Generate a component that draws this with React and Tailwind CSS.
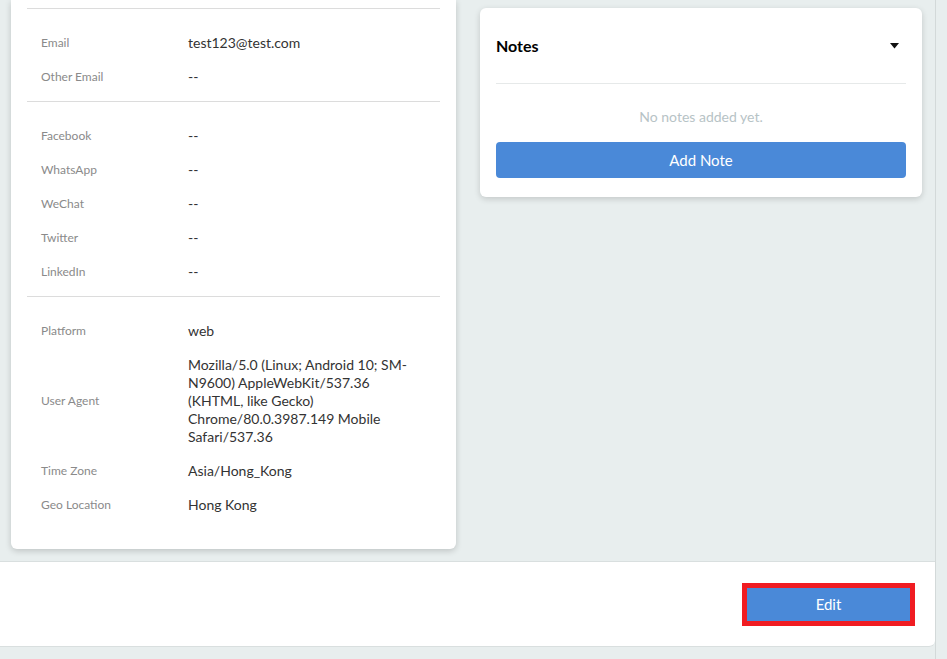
import React from 'react';

const sections = [
  [
    ['Email', 'test123@test.com'],
    ['Other Email', '--'],
  ],
  [
    ['Facebook', '--'],
    ['WhatsApp', '--'],
    ['WeChat', '--'],
    ['Twitter', '--'],
    ['LinkedIn', '--'],
  ],
  [
    ['Platform', 'web'],
    ['User Agent', 'Mozilla/5.0 (Linux; Android 10; SM-N9600) AppleWebKit/537.36 (KHTML, like Gecko) Chrome/80.0.3987.149 Mobile Safari/537.36'],
    ['Time Zone', 'Asia/Hong_Kong'],
    ['Geo Location', 'Hong Kong'],
  ],
];

const InfoRow = ({ label, value }) => (
  <div className="flex items-center py-2">
    <div className="w-[161px] shrink-0 pl-[14px] text-[12px] leading-[18px] text-[#8a8a8a]">{label}</div>
    <div className="w-[228px] text-[14px] leading-[18px] text-[#333]">{value}</div>
  </div>
);

const App = () => {
  return (
    <div className="flex h-[659px] overflow-hidden bg-[#e8eeee] font-['Lato','Noto_Sans',sans-serif]">
      <div className="flex w-[936px] shrink-0 flex-col border-r border-[#d3d9d9]">
        <div className="flex gap-6 pl-[11px] pr-[13px]">
          <div className="w-[445px] shrink-0 rounded-b-md bg-white px-4 pt-2 pb-[27px] shadow-[0_2px_6px_rgba(0,0,0,0.18)]">
            {sections.map((rows, i) => (
              <div key={i} className={`border-t border-[#dcdcdc] pt-[17px] ${i === sections.length - 1 ? '' : 'pb-[7px]'}`}>
                {rows.map(([label, value]) => (
                  <InfoRow key={label} label={label} value={value} />
                ))}
              </div>
            ))}
          </div>

          <div className="flex-1 pt-2">
            <div className="rounded-md bg-white px-4 pb-[19px] shadow-[0_2px_6px_rgba(0,0,0,0.16)]">
              <div className="flex h-[76px] items-center justify-between border-b border-[#e6e9e9] pt-px">
                <span className="text-[16px] font-bold text-black">Notes</span>
                <svg width="9" height="6" viewBox="0 0 9 6" className="mr-[7px]">
                  <path d="M0 0 H9 L4.5 5.5 Z" fill="#111" />
                </svg>
              </div>
              <div className="pt-[23px] text-center text-[14px] leading-5 text-[#b7c3c6]">No notes added yet.</div>
              <button className="mt-[15px] h-9 w-full rounded bg-[#4a89d8] text-[15px] text-white">Add Note</button>
            </div>
          </div>
        </div>

        <div className="mt-3 flex h-[86px] items-center justify-end rounded-br-md border-y border-[#d9dfdf] bg-white pr-5">
          <div className="border-[5px] border-[#f01c22]">
            <button className="block h-[33px] w-[163px] bg-[#4a89d8] text-[15px] text-white">Edit</button>
          </div>
        </div>
      </div>
      <div className="flex-1 bg-[#e8eeee]" />
    </div>
  );
};

export default App;
